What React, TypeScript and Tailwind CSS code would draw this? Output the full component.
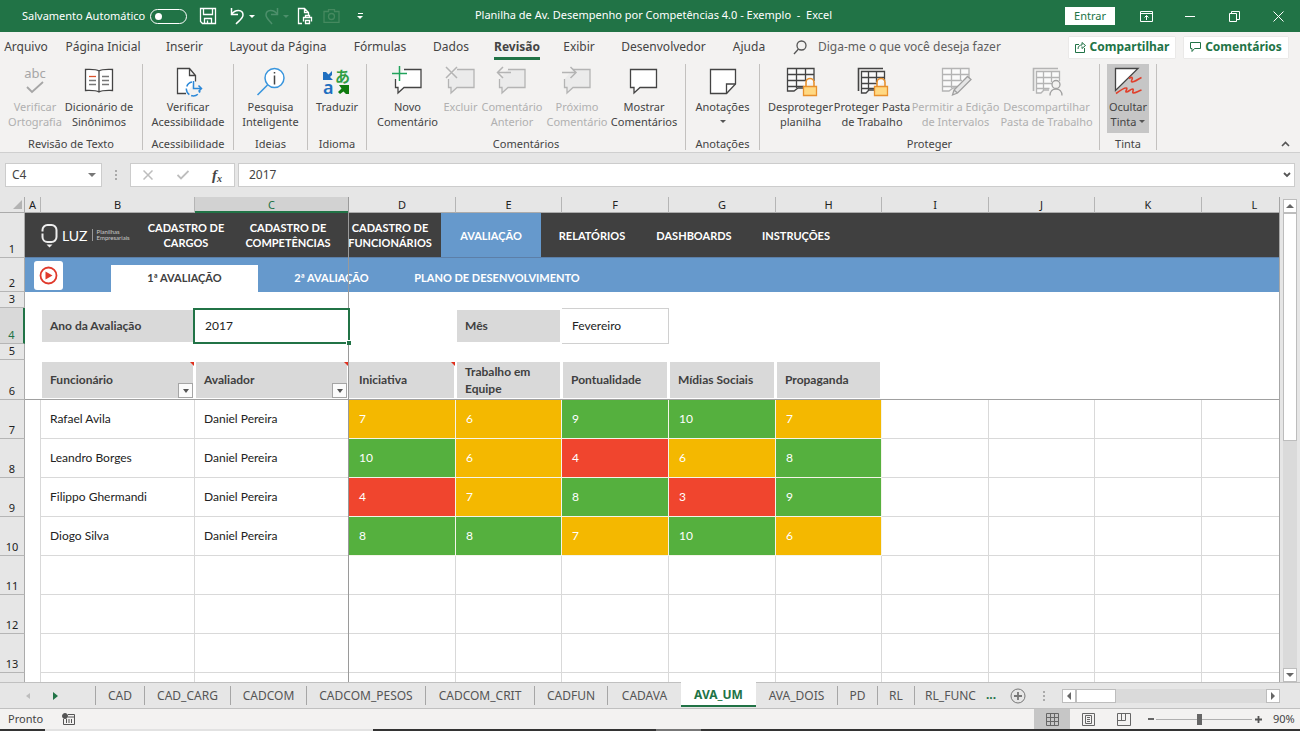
import { clsx } from "clsx";
import * as React from "react";

type Level = "high" | "mid" | "low";

interface RibbonItem {
  lines: string[];
  icon: React.ReactNode;
  className: string;
  disabled?: boolean;
  active?: boolean;
  caret?: boolean;
}

interface RibbonGroup {
  label: string;
  className: string;
  items: RibbonItem[];
}

const INK = "#444444";
const MUTED = "#b4b4b4";

const Icon = ({ children }: { children: React.ReactNode }) => (
  <svg className="overflow-visible" width="32" height="32" viewBox="0 0 32 32" fill="none" strokeWidth="1.3">
    {children}
  </svg>
);

const Bubble = ({ muted, children }: { muted?: boolean; children?: React.ReactNode }) => (
  <Icon>
    <path
      d={children ? "M12 5.500h17v18H12l-6 5.500v-5.500H3.500V15" : "M2.500 5.500h26v18H12l-6 5.500v-5.500H2.500z"}
      fill={muted ? "#ebebeb" : "#ffffff"}
      stroke={muted ? MUTED : INK}
    />
    {children}
  </Icon>
);

const Sheet = ({ color }: { color: string }) => (
  <g stroke={color}>
    <path d="M29 17V4.500H2.500V27H9l4-3h5" fill="#fafafa" />
    <path d="M2.500 10.500H29M2.500 16.500H22M2.500 22.500h16M11.500 4.500V24M20.500 4.500V17" />
  </g>
);

const Book = ({ color }: { color: string }) => (
  <g stroke={color}>
    <path d="M2.500 27V4.500H27" strokeWidth="1.600" />
    <path d="M28.500 17V7.500h-23V29H10l3-3h5" fill="#fafafa" />
    <path d="M5.500 13.500h23M5.500 19.500H21M5.500 24.500h13M12.500 7.500V26M20.500 7.500V18" />
  </g>
);

const Lock = () => (
  <g stroke="#e8912d">
    <path d="M21 22v-3.500a4 4 0 0 1 8 0V22" strokeWidth="1.600" />
    <path d="M18.500 22.500h13v9h-13z" fill="#ffd983" />
  </g>
);

const ribbonGroups: RibbonGroup[] = [
  {
    label: "Revisão de Texto",
    className: "w-[143px]",
    items: [
      {
        lines: ["Verificar", "Ortografia"],
        className: "w-16",
        disabled: true,
        icon: (
          <Icon>
            <text x="16" y="14" textAnchor="middle" fontSize="13" fill="#a6a6a6">
              abc
            </text>
            <path d="M8 23l5 5L24 18" stroke="#a6a6a6" strokeWidth="1.800" />
          </Icon>
        ),
      },
      {
        lines: ["Dicionário de", "Sinônimos"],
        className: "w-16 mr-2",
        icon: (
          <Icon>
            <path
              d="M16 7c-3-2-8-1.500-13.500-1.500v21c5 0 10-.5 13.500 1.500 3.500-2 8.500-1.500 13.500-1.500v-21C24 5.500 19 5 16 7zv21"
              fill="#ffffff"
              stroke={INK}
            />
            <path d="M19 12.500h7M19 16.500h7M19 20.500h7M6 16.500h7M6 20.500h7" stroke="#777777" />
            <path d="M6 12.500h7" stroke="#d9532c" />
          </Icon>
        ),
      },
    ],
  },
  {
    label: "Acessibilidade",
    className: "w-[91px]",
    items: [
      {
        lines: ["Verificar", "Acessibilidade"],
        className: "w-[86px]",
        icon: (
          <Icon>
            <path d="M14 29.500H5.500v-25h12l6 7v6M17.500 4.500v7h6" fill="#ffffff" stroke={INK} />
            <path d="M20 18a7 7 0 1 0 8 9" stroke="#2b88d8" strokeWidth="1.500" strokeDasharray="7 2" />
            <path d="M21.500 17v7.500H29M26.500 21.500l3 3-3 3" stroke="#2b88d8" strokeWidth="1.500" />
          </Icon>
        ),
      },
    ],
  },
  {
    label: "Ideias",
    className: "w-[74px]",
    items: [
      {
        lines: ["Pesquisa", "Inteligente"],
        className: "w-[70px]",
        icon: (
          <Icon>
            <circle cx="19.500" cy="14" r="9.500" fill="#ffffff" stroke="#3a96dd" strokeWidth="1.500" />
            <path d="M12.500 21l-10 10" stroke="#3a96dd" strokeWidth="1.600" />
            <path d="M19.500 11.500v9M19.500 8v1.600" stroke={INK} strokeWidth="1.500" />
          </Icon>
        ),
      },
    ],
  },
  {
    label: "Idioma",
    className: "w-[59px]",
    items: [
      {
        lines: ["Traduzir"],
        className: "w-[54px]",
        icon: (
          <Icon>
            <path d="M2 8h3l2.500 2.500L11 7v4l-2 2 3 3H2z" fill="#1f6fc0" />
            <text x="2" y="30" fontSize="18" fontWeight="600" fill="#1f6fc0">
              a
            </text>
            <text x="14" y="18" fontSize="15" fontWeight="700" fill="#2f9e44" fontFamily="Noto Sans CJK JP, sans-serif">
              あ
            </text>
            <path d="M18 21h10v9h-3l-2.500-2.500L19 30l-2-2 3.500-3.500z" fill="#107c10" />
          </Icon>
        ),
      },
    ],
  },
  {
    label: "Comentários",
    className: "w-[319px]",
    items: [
      {
        lines: ["Novo", "Comentário"],
        className: "w-[66px]",
        icon: (
          <Bubble>
            <path d="M7.500 2v15M0 9.500h15" stroke="#21a35b" strokeWidth="1.500" />
          </Bubble>
        ),
      },
      {
        lines: ["Excluir"],
        className: "w-10",
        disabled: true,
        icon: (
          <Bubble muted>
            <path d="M1 3l11 11M12 3L1 14" stroke={MUTED} strokeWidth="1.500" />
          </Bubble>
        ),
      },
      {
        lines: ["Comentário", "Anterior"],
        className: "w-[63px]",
        disabled: true,
        icon: (
          <Bubble muted>
            <path d="M15 8.500H1.500M7 3L1.500 8.500 7 14" stroke={MUTED} strokeWidth="1.500" />
          </Bubble>
        ),
      },
      {
        lines: ["Próximo", "Comentário"],
        className: "w-[67px]",
        disabled: true,
        icon: (
          <Bubble muted>
            <path d="M1 8.500h14M9.500 3L15 8.500 9.500 14" stroke={MUTED} strokeWidth="1.500" />
          </Bubble>
        ),
      },
      { lines: ["Mostrar", "Comentários"], className: "w-[67px]", icon: <Bubble /> },
    ],
  },
  {
    label: "Anotações",
    className: "w-[74px]",
    items: [
      {
        lines: ["Anotações", ""],
        className: "w-[70px]",
        caret: true,
        icon: (
          <Icon>
            <path d="M3.500 5.500h25V20l-9 9.500h-16z" fill="#ffffff" stroke={INK} />
            <path d="M28.500 20h-9v9.500" stroke={INK} />
          </Icon>
        ),
      },
    ],
  },
  {
    label: "Proteger",
    className: "w-[340px]",
    items: [
      {
        lines: ["Desproteger", "planilha"],
        className: "w-[67px]",
        icon: (
          <Icon>
            <Sheet color={INK} />
            <Lock />
          </Icon>
        ),
      },
      {
        lines: ["Proteger Pasta", "de Trabalho"],
        className: "w-[76px]",
        icon: (
          <Icon>
            <Book color={INK} />
            <Lock />
          </Icon>
        ),
      },
      {
        lines: ["Permitir a Edição", "de Intervalos"],
        className: "w-[91px]",
        disabled: true,
        icon: (
          <Icon>
            <Sheet color={MUTED} />
            <path d="M12.500 31l1.500-5L27.500 12.500l3.500 3L17.500 29zM14 26l3.500 3" fill="#e6e6e6" stroke="#a0a0a0" />
          </Icon>
        ),
      },
      {
        lines: ["Descompartilhar", "Pasta de Trabalho"],
        className: "w-[91px]",
        disabled: true,
        icon: (
          <Icon>
            <Book color={MUTED} />
            <circle cx="25" cy="20.500" r="4" fill="#f3f2f1" stroke="#a0a0a0" />
            <path d="M19 31.500c0-4 2.500-6.500 6-6.500s6 2.500 6 6.500" fill="#f3f2f1" stroke="#a0a0a0" />
          </Icon>
        ),
      },
    ],
  },
  {
    label: "Tinta",
    className: "w-[57px]",
    items: [
      {
        lines: ["Ocultar", "Tinta"],
        className: "w-[42px]",
        active: true,
        caret: true,
        icon: (
          <Icon>
            <path d="M3.500 4.500H26l-22.500 22z" fill="#ffffff" stroke={INK} />
            <path
              d="M17 14.500c3-2 4-1 3 1s-1 3 2 2 5-3 7.500-4M4 29.500c4-3 9-6 10.500-5.500s-2 4 0 4 4-3 6-3-1 4 1 4 5-2 8-3"
              stroke="#e0402c"
              strokeWidth="1.600"
            />
          </Icon>
        ),
      },
    ],
  },
];

const menuTabs = [
  { label: "Arquivo", className: "w-[50px]" },
  { label: "Página Inicial", className: "w-[104px]" },
  { label: "Inserir", className: "w-[59px]" },
  { label: "Layout da Página", className: "w-[128px]" },
  { label: "Fórmulas", className: "w-[76px]" },
  { label: "Dados", className: "w-[66px]" },
  { label: "Revisão", className: "w-[66px]", active: true },
  { label: "Exibir", className: "w-[58px]" },
  { label: "Desenvolvedor", className: "w-[111px]" },
  { label: "Ajuda", className: "w-[60px]" },
];

const columns = [
  { id: "A", className: "w-[16px]" },
  { id: "B", className: "w-[154px]" },
  { id: "C", className: "w-[154px]" },
  { id: "D", className: "w-[107px]" },
  { id: "E", className: "w-[106px]" },
  { id: "F", className: "w-[107px]" },
  { id: "G", className: "w-[107px]" },
  { id: "H", className: "w-[106px]" },
  { id: "I", className: "w-[107px]" },
  { id: "J", className: "w-[106px]" },
  { id: "K", className: "w-[107px]" },
  { id: "L", className: "" },
];

const navItems = [
  "CADASTRO DE CARGOS",
  "CADASTRO DE COMPETÊNCIAS",
  "CADASTRO DE FUNCIONÁRIOS",
  "AVALIAÇÃO",
  "RELATÓRIOS",
  "DASHBOARDS",
  "INSTRUÇÕES",
];

const skills = ["Iniciativa", "Trabalho em Equipe", "Pontualidade", "Mídias Sociais", "Propaganda"];

const reviews = [
  { row: 7, name: "Rafael Avila", reviewer: "Daniel Pereira", scores: [7, 6, 9, 10, 7] },
  { row: 8, name: "Leandro Borges", reviewer: "Daniel Pereira", scores: [10, 6, 4, 6, 8] },
  { row: 9, name: "Filippo Ghermandi", reviewer: "Daniel Pereira", scores: [4, 7, 8, 3, 9] },
  { row: 10, name: "Diogo Silva", reviewer: "Daniel Pereira", scores: [8, 8, 7, 10, 6] },
];

const levelColors: Record<Level, string> = {
  high: "bg-[#55b03e]",
  mid: "bg-[#f4b800]",
  low: "bg-[#f0452e]",
};

const getLevel = (score: number): Level => (score >= 8 ? "high" : score >= 5 ? "mid" : "low");

const sheetTabs = [
  { label: "CAD", className: "w-[49px] border-r" },
  { label: "CAD_CARG", className: "w-[86px] border-r" },
  { label: "CADCOM", className: "w-[76px] border-r" },
  { label: "CADCOM_PESOS", className: "w-[119px] border-r" },
  { label: "CADCOM_CRIT", className: "w-[109px] border-r" },
  { label: "CADFUN", className: "w-[73px] border-r" },
  { label: "CADAVA", className: "w-[73px]" },
  { label: "AVA_UM", className: "w-[75px]", active: true },
  { label: "AVA_DOIS", className: "w-[82px] border-r" },
  { label: "PD", className: "w-10 border-r" },
  { label: "RL", className: "w-[37px] border-r" },
  { label: "RL_FUNC", className: "w-[71px]" },
];

const TitleBar = () => (
  <header className="flex h-8 items-center bg-[#217346] text-white">
    <label className="flex items-center gap-[6px] pl-[22px] text-[11px] whitespace-nowrap">
      <span className="w-[122px]">Salvamento Automático</span>
      <input
        type="checkbox"
        role="switch"
        className="h-[15px] w-[37px] appearance-none rounded-full border border-white pl-1 before:block before:mt-[3px] before:size-[7px] before:rounded-full before:bg-white"
      />
    </label>
    <div className="flex items-center pl-3">
      <button aria-label="Salvar" className="w-[30px]">
        <svg width="18" height="18" viewBox="0 0 18 18" fill="none" stroke="currentColor" strokeWidth="1.300">
          <path d="M1.500 1.500h15v15h-13l-2-2zM4.500 1.500v6h9v-6M5.500 16.500v-5h7v5M8.500 16v-2.500" />
        </svg>
      </button>
      <button aria-label="Desfazer" className="flex w-[34px] items-center gap-[3px]">
        <svg width="17" height="18" viewBox="0 0 17 18" fill="none" stroke="currentColor" strokeWidth="1.500">
          <path d="M2.500 1v6.500H9M2.500 7.500C6 2 14 2 14 8c0 3-3 5-7 9" />
        </svg>
        <span className="border-x-[3px] border-t-[3px] border-x-transparent border-t-white" />
      </button>
      <button aria-label="Refazer" disabled className="flex w-[34px] items-center gap-[3px] text-[#4d8f6b]">
        <svg width="17" height="18" viewBox="0 0 17 18" fill="none" stroke="currentColor" strokeWidth="1.500">
          <path d="M14.500 1v6.500H8M14.500 7.500C11 2 3 2 3 8c0 3 3 5 6 9" />
        </svg>
        <span className="border-x-[3px] border-t-[3px] border-x-transparent border-t-current" />
      </button>
      <button aria-label="Visualizar impressão" className="w-[26px]">
        <svg width="16" height="18" viewBox="0 0 16 18" fill="none" stroke="currentColor" strokeWidth="1.300">
          <path d="M5 16.500H1.500v-15h6l4 4V8M7.500 1.500v4h4M6.500 14.500v-4h8v4M8.500 10V8.500h4V10M8.500 13.500h4v3h-4z" />
        </svg>
      </button>
      <button aria-label="Câmera" disabled className="w-[31px] text-[#45895f]">
        <svg width="17" height="14" viewBox="0 0 17 14" fill="none" stroke="currentColor" strokeWidth="1.300">
          <path d="M1 2.500h4.500v-2h6v2H16v11H1z" />
          <circle cx="8.500" cy="7.500" r="3" />
        </svg>
      </button>
      <button aria-label="Personalizar" className="flex w-3 flex-col items-center gap-[2px]">
        <span className="h-px w-[5px] bg-white" />
        <span className="border-x-[3px] border-t-[3px] border-x-transparent border-t-white" />
      </button>
    </div>
    <h1 className="flex-1 pr-[124px] pb-[2px] text-center text-[11px] whitespace-pre">
      Planilha de Av. Desempenho por Competências 4.0 - Exemplo  -  Excel
    </h1>
    <button className="h-[18px] w-[50px] bg-white text-[11px] leading-[18px] text-[#217346]">
      Entrar
    </button>
    <div className="flex items-center pl-[9px]">
      <button aria-label="Opções da faixa" className="flex w-11 justify-center">
        <svg width="13" height="11" viewBox="0 0 13 11" fill="none" stroke="currentColor">
          <path d="M.5.5h12v10H.5zM.5 2.500h12M6.500 9V4.500M4.500 6.500l2-2 2 2" />
        </svg>
      </button>
      <button aria-label="Minimizar" className="flex w-11 justify-center">
        <span className="h-px w-[10px] bg-white" />
      </button>
      <button aria-label="Restaurar" className="flex w-11 justify-center">
        <svg width="11" height="11" viewBox="0 0 11 11" fill="none" stroke="currentColor">
          <path d="M.5 2.500h7v8h-7zM2.500 2.500v-2h8v8h-3" />
        </svg>
      </button>
      <button aria-label="Fechar" className="flex w-11 justify-center">
        <svg width="11" height="11" viewBox="0 0 11 11" fill="none" stroke="currentColor">
          <path d="M.5.5l10 10M10.500.5l-10 10" />
        </svg>
      </button>
    </div>
  </header>
);

const MenuTabs = () => (
  <nav className="flex h-[30px] items-center pl-px text-[12px] whitespace-nowrap">
    {menuTabs.map((tab) => (
      <button key={tab.label} className={clsx("flex h-full items-center justify-center", tab.className)}>
        <span
          className={clsx(
            "flex h-[26px] items-center border-b-[3px] pt-[3px]",
            tab.active ? "border-[#217346] font-bold" : "border-transparent",
          )}
        >
          {tab.label}
        </span>
      </button>
    ))}
    <label className="flex flex-1 items-center gap-[11px] pl-[14px]">
      <svg width="14" height="15" viewBox="0 0 14 15" fill="none" stroke="#555555" strokeWidth="1.300">
        <circle cx="8.500" cy="5.500" r="4.500" />
        <path d="M5.500 9L1 14" />
      </svg>
      <input
        aria-label="Pesquisar"
        placeholder="Diga-me o que você deseja fazer"
        className="w-[220px] bg-transparent placeholder:text-[#5f5f5f] placeholder:opacity-100"
      />
    </label>
    <div className="flex gap-[9px] pr-3 font-bold text-[#217346]">
      <button className="flex h-[21px] w-[106px] items-center justify-center gap-1 bg-white shadow-[0_0_1px_#bbbbbb]">
        <svg width="11" height="12" viewBox="0 0 11 12" fill="none" stroke="currentColor">
          <path d="M4 3.500H.5v8h9V7M3 8c0-3 2-4 4-4V1.500l3.500 3L7 7.500V5.500" />
        </svg>
        Compartilhar
      </button>
      <button className="flex h-[21px] w-[104px] items-center justify-center gap-1 bg-white shadow-[0_0_1px_#bbbbbb]">
        <svg width="11" height="11" viewBox="0 0 11 11" fill="none" stroke="currentColor">
          <path d="M.5.5h10v6h-6l-2.500 3v-3H.5z" />
        </svg>
        Comentários
      </button>
    </div>
  </nav>
);

const Caret = () => (
  <span className="inline-block border-x-[3px] border-t-[3px] border-x-transparent border-t-[#555555]" />
);

const RibbonButton = ({ item }: { item: RibbonItem }) => (
  <button
    disabled={item.disabled}
    className={clsx(
      "flex h-[69px] flex-col items-center text-[11px] leading-[15px] whitespace-nowrap",
      item.className,
      item.disabled && "text-[#b0b0b0]",
      item.active && "bg-[#c6c6c6]",
    )}
  >
    <span className="mb-[3px]">{item.icon}</span>
    {item.lines.map((line, i) => (
      <span key={i} className="flex items-center gap-[3px]">
        {line || (!item.caret && "\u00a0")}
        {item.caret && i === item.lines.length - 1 && (
          <span className="flex h-[15px] items-center">
            <Caret />
          </span>
        )}
      </span>
    ))}
  </button>
);

const Ribbon = () => (
  <div className="flex h-[91px] items-start border-b border-[#cfcfcf] pt-[2px]">
    {ribbonGroups.map((group) => (
      <section
        key={group.label}
        className={clsx("flex h-[86px] shrink-0 flex-col justify-between border-r border-[#c3c1bf]", group.className)}
      >
        <div className="flex justify-center">
          {group.items.map((item) => (
            <RibbonButton key={item.lines.join(" ")} item={item} />
          ))}
        </div>
        <h2 className="text-center text-[11px] leading-[13px]">{group.label}</h2>
      </section>
    ))}
    <button aria-label="Recolher faixa" className="mr-[10px] ml-auto self-end pb-[5px]">
      <svg width="9" height="6" viewBox="0 0 9 6" fill="none" stroke="#555555" strokeWidth="1.600">
        <path d="M1 5l3.500-3.500L8 5" />
      </svg>
    </button>
  </div>
);

const FormulaBar = () => (
  <div className="flex h-11 items-center bg-[#e6e6e6] pr-[5px] pl-[5px] text-[12px]">
    <div className="flex h-6 w-[97px] items-center border border-[#cccccc] bg-white">
      <input aria-label="Caixa de nome" defaultValue="C4" className="w-[82px] pl-[6px]" />
      <button aria-label="Abrir lista de nomes" className="flex">
        <span className="border-x-4 border-t-4 border-x-transparent border-t-[#777777]" />
      </button>
    </div>
    <span className="flex w-7 flex-col items-center gap-[2px]">
      <i className="size-[2px] bg-[#aaaaaa]" />
      <i className="size-[2px] bg-[#aaaaaa]" />
      <i className="size-[2px] bg-[#aaaaaa]" />
    </span>
    <div className="flex h-6 w-[105px] items-center border border-[#cccccc] bg-white">
      <button aria-label="Cancelar" className="flex w-[34px] justify-center text-[#bdbdbd]">
        <svg width="10" height="10" viewBox="0 0 10 10" fill="none" stroke="currentColor" strokeWidth="1.500">
          <path d="M.5.5l9 9M9.500.5l-9 9" />
        </svg>
      </button>
      <button aria-label="Inserir" className="flex w-[35px] justify-center text-[#bdbdbd]">
        <svg width="12" height="10" viewBox="0 0 12 10" fill="none" stroke="currentColor" strokeWidth="1.800">
          <path d="M.5 5L4 8.500 11.500 1" />
        </svg>
      </button>
      <button
        aria-label="Inserir função"
        className="w-[34px] font-['Liberation_Serif',serif] text-[15px] leading-none font-bold italic"
      >
        f<sub className="text-[10px]">x</sub>
      </button>
    </div>
    <div className="ml-[3px] flex h-6 flex-1 items-center border border-[#cccccc] bg-white">
      <input aria-label="Barra de fórmulas" defaultValue="2017" className="flex-1 pl-[10px]" />
      <button aria-label="Expandir barra de fórmulas" className="pr-[3px]">
        <svg width="8" height="6" viewBox="0 0 8 6" fill="none" stroke="#555555" strokeWidth="1.800">
          <path d="M1 1l3 3 3-3" />
        </svg>
      </button>
    </div>
  </div>
);

const RowHeader = ({ row, active }: { row?: number; active?: boolean }) => (
  <th
    scope="row"
    className={clsx(
      "border-b border-b-[#b5b5b5] p-0 pb-px text-center align-bottom font-['Noto_Sans',sans-serif] text-[11px] leading-[14px] font-normal",
      active ? "border-r-2 border-r-[#217346] bg-[#d9d9d9] text-[#217346]" : "border-r border-r-[#ababab] bg-[#e6e6e6]",
    )}
  >
    {row}
  </th>
);

const FilterButton = ({ label }: { label: string }) => (
  <button
    aria-label={`Filtrar ${label}`}
    className="absolute right-[2px] bottom-px flex size-[15px] items-center justify-center border border-[#a5a5a5] bg-[#fbfbfb]"
  >
    <span className="border-x-[3px] border-t-4 border-x-transparent border-t-[#555555]" />
  </button>
);

interface HeadCellProps {
  children: string;
  note?: boolean;
  filter?: boolean;
  flush?: boolean;
}

const HeadCell = ({ children, note, filter, flush }: HeadCellProps) => (
  <th scope="col" className="relative border-b border-[#a0a0a0] p-0 text-left">
    <div
      className={clsx(
        "mt-px mr-[2px] flex h-9 items-center bg-[#d9d9d9] pr-4 pb-px leading-[17px] text-[#404040]",
        flush ? "pl-[10px]" : "ml-px pl-2",
      )}
    >
      {children}
    </div>
    {note && (
      <span className="absolute top-[2px] right-px border-t-4 border-l-4 border-t-[#e0301e] border-l-transparent" />
    )}
    {filter && <FilterButton label={children} />}
  </th>
);

const Logo = () => (
  <div className="flex w-[110px] items-center pl-4 font-normal text-white">
    <svg width="17" height="25" viewBox="0 0 17 25" fill="none" stroke="#ededed" strokeWidth="2">
      <path d="M1.500 8.500V7a5 5 0 0 1 5-5h4a5 5 0 0 1 5 5v7a5 5 0 0 1-5 5h-4a5 5 0 0 1-5-5v-3.500" />
      <path d="M5.500 21.500h6l-3 3z" fill="#ededed" stroke="none" />
    </svg>
    <span className="pl-1 text-[14px]">LUZ</span>
    <span className="ml-1 border-l border-[#999999] pl-1 text-[6px] leading-[6px] text-[#c8c8c8]">
      Planilhas
      <br />
      Empresariais
    </span>
  </div>
);

const Spreadsheet = () => (
  <div className="relative min-w-0 flex-1 overflow-hidden border-r border-[#a6a6a6] bg-white">
    <table className="w-full table-fixed border-separate border-spacing-0 font-['Lato','Open_Sans',sans-serif] text-[12px] text-[#222222]">
      <colgroup>
        <col className="w-[25px]" />
        {columns.map((column) => (
          <col key={column.id} className={column.className} />
        ))}
      </colgroup>
      <thead className="bg-[#e6e6e6] font-['Noto_Sans',sans-serif] leading-[15px]">
        <tr className="h-4">
          <td className="border-r border-b border-[#ababab] p-0">
            <svg className="ml-auto mr-[2px]" width="9" height="9" viewBox="0 0 9 9">
              <path d="M9 0v9H0z" fill="#b3b3b3" />
            </svg>
          </td>
          {columns.map((column) => (
            <th
              key={column.id}
              scope="col"
              className={clsx(
                "border-b p-0 text-[11px] font-normal",
                column.id === "C"
                  ? "border-b-[#217346] bg-[#d2d2d2] text-[#217346] shadow-[inset_0_-1px_#217346]"
                  : "border-b-[#ababab]",
                column.id === "L" ? "pl-7" : "border-r border-r-[#b5b5b5]",
              )}
            >
              {column.id}
            </th>
          ))}
        </tr>
      </thead>
      <tbody>
        <tr className="h-[45px]">
          <RowHeader row={1} />
          <td colSpan={12} className="border-b border-[#5c7fa8] bg-[#404040] p-0">
            <nav className="flex h-11 text-[11px] font-bold text-white">
              <Logo />
              {navItems.map((item) => (
                <a
                  key={item}
                  href="#"
                  className={clsx(
                    "flex items-center justify-center px-2 text-center leading-[15px]",
                    item === "AVALIAÇÃO" ? "w-[100px] bg-[#6699cc]" : "w-[102px]",
                  )}
                >
                  {item}
                </a>
              ))}
            </nav>
          </td>
        </tr>
        <tr className="h-[34px]">
          <RowHeader row={2} />
          <td colSpan={12} className="bg-[#6699cc] p-0">
            <nav className="flex h-[34px] items-end text-[11px] font-bold text-white">
              <div className="w-[86px] self-center pl-[9px]">
                <button aria-label="Assistir ao vídeo" className="flex size-[29px] items-center justify-center rounded-[3px] bg-white">
                  <svg width="19" height="19" viewBox="0 0 19 19" fill="none">
                    <circle cx="9.500" cy="9.500" r="8" stroke="#e0392b" strokeWidth="1.800" />
                    <path d="M6.500 5.500l7 4-7 4z" fill="#e0392b" />
                  </svg>
                </button>
              </div>
              <a href="#" className="flex h-[27px] w-[147px] items-center justify-center bg-white text-[#404040]">
                1ª AVALIAÇÃO
              </a>
              <a href="#" className="flex h-[27px] w-[147px] items-center justify-center">
                2ª AVALIAÇÃO
              </a>
              <a href="#" className="flex h-[27px] w-[184px] items-center justify-center whitespace-nowrap">
                PLANO DE DESENVOLVIMENTO
              </a>
            </nav>
          </td>
        </tr>
        <tr className="h-4">
          <RowHeader row={3} />
          <td colSpan={12} className="p-0" />
        </tr>
        <tr className="h-9">
          <RowHeader row={4} active />
          <td className="p-0" />
          <td className="p-0">
            <div className="mx-px flex h-8 items-center bg-[#d9d9d9] pl-2 font-bold text-[#404040]">Ano da Avaliação</div>
          </td>
          <td className="relative z-20 p-0 pl-[10px]">
            2017
            <span className="absolute inset-y-0 -right-px -left-[2px] border-2 border-[#217346]" />
            <span className="absolute -right-[2px] -bottom-px size-[5px] border-t border-l border-white bg-[#217346]" />
          </td>
          <td className="p-0" />
          <td className="p-0">
            <div className="mr-[2px] ml-px flex h-8 items-center bg-[#d9d9d9] pl-2 font-bold text-[#404040]">Mês</div>
          </td>
          <td className="border border-l-0 border-[#d0d0d0] p-0 pl-[10px]">Fevereiro</td>
          <td colSpan={6} className="p-0" />
        </tr>
        <tr className="h-4">
          <RowHeader row={5} />
          <td colSpan={12} className="p-0" />
        </tr>
        <tr className="h-10">
          <RowHeader row={6} />
          <td className="border-b border-[#a0a0a0] p-0" />
          <HeadCell note filter>
            Funcionário
          </HeadCell>
          <HeadCell note filter>
            Avaliador
          </HeadCell>
          {skills.map((skill, i) => (
            <HeadCell key={skill} note={i === 0} flush={i === 0}>
              {skill}
            </HeadCell>
          ))}
          <td colSpan={4} className="border-b border-[#a0a0a0] p-0" />
        </tr>
        {reviews.map((review) => (
          <tr key={review.row} className="h-[39px]">
            <RowHeader row={review.row} />
            <td className="border-r border-[#d9d9d9] p-0" />
            <td className="border-r border-b border-[#d9d9d9] p-0 pl-[9px]">{review.name}</td>
            <td className="border-r border-b border-[#d9d9d9] p-0 pl-[9px]">{review.reviewer}</td>
            {review.scores.map((score, i) => (
              <td
                key={i}
                className={clsx("border-r border-b border-[#f4f4e8] p-0 pl-[10px] text-white", levelColors[getLevel(score)])}
              >
                {score}
              </td>
            ))}
            {[0, 1, 2, 3].map((i) => (
              <td key={i} className={clsx("border-b border-[#d9d9d9] p-0", i < 3 && "border-r")} />
            ))}
          </tr>
        ))}
        {[11, 12, 13].map((row) => (
          <tr key={row} className="h-[39px]">
            <RowHeader row={row} />
            <td className="border-r border-[#d9d9d9] p-0" />
            {columns.slice(1).map((column) => (
              <td
                key={column.id}
                className={clsx("border-b border-[#d9d9d9] p-0", column.id !== "L" && "border-r")}
              />
            ))}
          </tr>
        ))}
        <tr className="h-[9px]">
          <td className="border-r border-[#ababab] bg-[#e6e6e6] p-0" />
          {columns.map((column) => (
            <td key={column.id} className={clsx("border-[#d9d9d9] p-0", column.id !== "L" && "border-r")} />
          ))}
        </tr>
      </tbody>
    </table>
    {/* frozen pane divider */}
    <span className="absolute top-0 bottom-0 left-[348px] z-10 w-px bg-[#9a9a9a]" />
  </div>
);

const ScrollButton = ({ label, points }: { label: string; points: string }) => (
  <button
    aria-label={label}
    className="flex size-[14px] shrink-0 items-center justify-center border border-[#bdbdbd] bg-white"
  >
    <svg width="8" height="8" viewBox="0 0 8 8">
      <polygon points={points} fill="#666666" />
    </svg>
  </button>
);

const SheetTabs = () => (
  <div className="flex h-[27px] items-start border-y border-[#c0c0c0] bg-[#e6e6e6] text-[12px] text-[#555555]">
    <div className="flex h-[25px] w-24 items-center pl-[26px]">
      <button aria-label="Planilhas anteriores" className="w-[27px]">
        <span className="block w-0 border-y-[3px] border-r-4 border-y-transparent border-r-[#bdbdbd]" />
      </button>
      <button aria-label="Próximas planilhas">
        <span className="block w-0 border-y-4 border-l-[5px] border-y-transparent border-l-[#217346]" />
      </button>
      <span className="ml-auto h-[19px] w-px bg-[#a6a6a6]" />
    </div>
    {sheetTabs.map((tab) => (
      <button
        key={tab.label}
        className={clsx(
          "flex shrink-0 items-center justify-center",
          tab.className,
          tab.active
            ? "-mt-px h-[25px] border-b-2 border-[#217346] bg-white pt-[2px] font-bold text-[#217346]"
            : "mt-[3px] h-[19px] border-[#a6a6a6]",
        )}
      >
        {tab.label}
      </button>
    ))}
    <div className="flex h-[25px] flex-1 items-center pr-5">
      <button aria-label="Mais planilhas" className="w-[24px] pb-[2px] text-left font-bold text-[#217346]">
        ...
      </button>
      <button aria-label="Nova planilha" className="w-[33px]">
        <svg width="16" height="16" viewBox="0 0 16 16" fill="none" stroke="#777777">
          <circle cx="8" cy="8" r="7" />
          <path d="M4 8h8M8 4v8" strokeWidth="1.800" />
        </svg>
      </button>
      <span className="flex w-[19px] flex-col gap-[2px]">
        <i className="size-[2px] bg-[#aaaaaa]" />
        <i className="size-[2px] bg-[#aaaaaa]" />
        <i className="size-[2px] bg-[#aaaaaa]" />
      </span>
      <div className="flex flex-1 bg-[#dadada]">
        <ScrollButton label="Rolar para a esquerda" points="6,0 6,8 2,4" />
        <span className="h-[14px] w-10 border border-[#bdbdbd] bg-white" />
        <span className="flex-1" />
        <ScrollButton label="Rolar para a direita" points="2,0 2,8 6,4" />
      </div>
    </div>
  </div>
);

const StatusBar = () => (
  <footer className="flex h-5 items-center text-[11px]">
    <span className="w-[62px] pl-2">Pronto</span>
    <button aria-label="Gravar macro">
      <svg width="13" height="12" viewBox="0 0 13 12" fill="none" stroke="#555555">
        <path d="M6 1.500h6.500v10H1.500V6M4.500 6v4M7 6v4M9.500 6v4M6 4h6" />
        <circle cx="3" cy="3" r="2.500" fill="#555555" />
      </svg>
    </button>
    <div className="ml-auto flex h-full">
      <button aria-label="Normal" className="flex w-9 items-center justify-center bg-[#c6c6c6]">
        <svg width="13" height="13" viewBox="0 0 13 13" fill="none" stroke="#666666">
          <path d="M.5.5h12v12H.5zM.5 4.500h12M.5 8.500h12M4.500.5v12M8.500.5v12" />
        </svg>
      </button>
      <button aria-label="Layout da página" className="flex w-9 items-center justify-center">
        <svg width="13" height="13" viewBox="0 0 13 13" fill="none" stroke="#666666">
          <path d="M.5.5h12v12H.5zM3.500 2.500h6v8h-6zM5 4.500h3M5 6.500h3M5 8.500h3" />
        </svg>
      </button>
      <button aria-label="Quebra de página" className="flex w-9 items-center justify-center">
        <svg width="14" height="13" viewBox="0 0 14 13" fill="none" stroke="#666666">
          <path d="M.5.5h13v12H.5zM.5 7.500h8v-7M4.500.5v7" />
        </svg>
      </button>
    </div>
    <div className="flex items-center pl-1">
      <button aria-label="Diminuir zoom" className="flex w-[10px] justify-center">
        <span className="h-[2px] w-[6px] bg-[#666666]" />
      </button>
      <input
        type="range"
        aria-label="Zoom"
        min={10}
        max={200}
        defaultValue={96}
        className="h-px w-[96px] appearance-none bg-[#b0b0b0] [&::-webkit-slider-thumb]:h-[11px] [&::-webkit-slider-thumb]:w-[5px] [&::-webkit-slider-thumb]:appearance-none [&::-webkit-slider-thumb]:bg-[#666666]"
      />
      <button aria-label="Aumentar zoom" className="flex w-[13px] justify-center">
        <svg width="7" height="7" viewBox="0 0 7 7" stroke="#555555" strokeWidth="1.800">
          <path d="M0 3.500h7M3.500 0v7" />
        </svg>
      </button>
    </div>
    <span className="w-[35px] pl-2">90%</span>
  </footer>
);

export default function App() {
  return (
    <div className="flex min-h-screen flex-col overflow-hidden bg-[#f3f2f1] font-['Noto_Sans','Open_Sans',sans-serif] text-[#444444]">
      <TitleBar />
      <MenuTabs />
      <Ribbon />
      <FormulaBar />
      <main className="flex flex-1 bg-[#e6e6e6]">
        <Spreadsheet />
        <div className="flex w-5 flex-col pt-[2px] pl-[3px]">
          <ScrollButton label="Rolar para cima" points="0,6 8,6 4,2" />
          <div className="w-[14px] flex-1 bg-[#dadada]">
            <div className="h-[228px] border border-[#bdbdbd] bg-white" />
          </div>
          <ScrollButton label="Rolar para baixo" points="0,2 8,2 4,6" />
        </div>
      </main>
      <SheetTabs />
      <StatusBar />
      <div className="flex h-[2px] bg-[#333333]">
        <span className="w-[45px]" />
        <span className="w-[328px] bg-[#e2e2e2]" />
        <span className="w-[283px]" />
        <span className="w-[45px] bg-[#777777]" />
      </div>
    </div>
  );
}
